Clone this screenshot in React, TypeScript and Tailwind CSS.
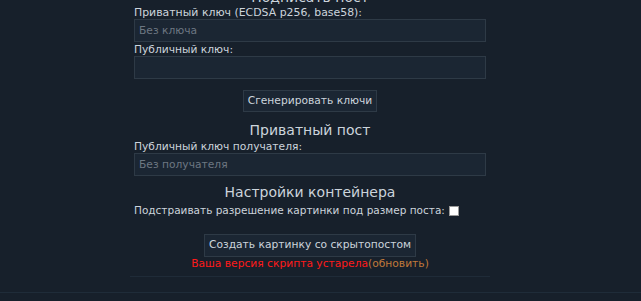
export default function App() {
  return (
    <div className="h-[301px] w-full overflow-hidden bg-[#17202b] font-['DejaVu_Sans',sans-serif] text-[#ccd4dc]">
      <div className="ml-[130px] -mt-[12px] w-[360px]">
        <div className="px-1">
          <h2 className="text-center text-[14px] leading-[18px]">Подписать пост</h2>
          <p className="text-[10.9px] leading-[13px]">Приватный ключ (ECDSA p256, base58):</p>
          <input
            className="block h-[23px] w-full border border-[#2e3a46] bg-[#1b2633] px-1 text-[10.7px] text-[#ccd4dc] outline-none placeholder:text-[#6d7782]"
            placeholder="Без ключа"
          />
          <p className="mt-[1px] text-[10.7px] leading-[13px]">Публичный ключ:</p>
          <input className="block h-[23px] w-full border border-[#2e3a46] bg-[#1b2633] px-1 text-[10.7px] outline-none" />
          <div className="mt-[11px] flex justify-center">
            <button className="h-[22px] border border-[#2e3a46] bg-[#1b2633] px-1 text-[10.7px] text-[#ccd4dc]">
              Сгенерировать ключи
            </button>
          </div>
          <h2 className="mt-[8px] text-center text-[14px] leading-[20px]">Приватный пост</h2>
          <p className="text-[10.7px] leading-[13px]">Публичный ключ получателя:</p>
          <input
            className="block h-[23px] w-full border border-[#2e3a46] bg-[#1b2633] px-1 text-[10.7px] outline-none placeholder:text-[#6d7782]"
            placeholder="Без получателя"
          />
          <h2 className="mt-[6px] text-center text-[14px] leading-[20px]">Настройки контейнера</h2>
          <div className="mt-[2px] flex items-center text-[10.5px] leading-[13px]">
            <span>Подстраивать разрешение картинки под размер поста:</span>
            <span className="ml-[4px] inline-block h-[10px] w-[10px] border border-[#999] bg-white" />
          </div>
          <div className="mt-[17px] flex justify-center">
            <button className="h-[23px] border border-[#2e3a46] bg-[#1b2633] px-1 text-[10.7px] text-[#ccd4dc]">
              Создать картинку со скрытопостом
            </button>
          </div>
          <p className="text-center text-[10.7px] leading-[14px]">
            <span className="text-[#ff1a1a]">Ваша версия скрипта устарела</span>
            <span className="text-[#c0793a]">(обновить)</span>
          </p>
        </div>
        <div className="mt-[5px] h-px bg-[#1f2b38]" />
      </div>
      <div className="mt-[15px] h-px w-full bg-[#1f2c39]" />
    </div>
  )
}
